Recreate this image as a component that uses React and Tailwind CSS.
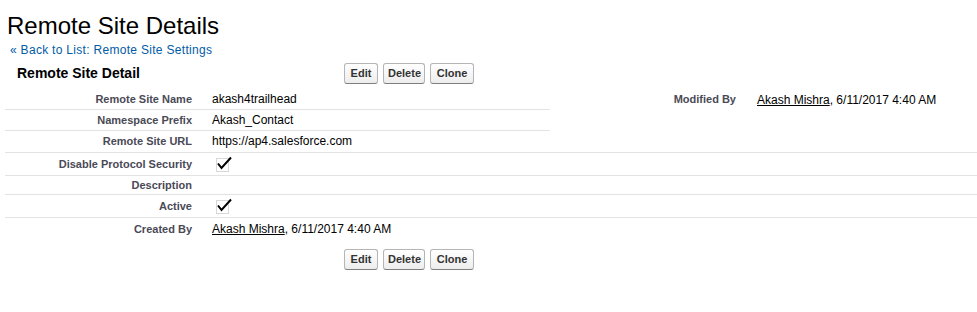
import React from "react";

const btn =
  "h-[21px] px-[4px] rounded-[3px] border border-[#b5b5b5] border-b-[#7f7f7f] bg-gradient-to-b from-white to-[#ededed] text-[11px] font-bold text-[#333] leading-none";

function Buttons() {
  return (
    <div className="flex gap-[5px]">
      <button className={`${btn} w-[34px]`}>Edit</button>
      <button className={`${btn} w-[42px]`}>Delete</button>
      <button className={`${btn} w-[44px]`}>Clone</button>
    </div>
  );
}

function Check() {
  return (
    <svg width="22" height="16" viewBox="0 0 22 16" className="block">
      <rect x="4.5" y="2.5" width="12" height="13" fill="none" stroke="#b0b0b0" strokeDasharray="1 1" />
      <path d="M6 7.5 L9.5 12 L19 1.5" fill="none" stroke="#000" strokeWidth="2" />
    </svg>
  );
}

function Row({ label, h = "h-[21px]", border = true, full = true, children }) {
  return (
    <div className={`flex items-center ${h} ${border ? "border-b border-[#e3e3e3]" : ""}`}>
      <div className="w-[197px] shrink-0 pr-[10px] text-right text-[11px] font-bold text-[#4a4a56]">{label}</div>
      <div className={`${full ? "flex-1" : "w-[348px]"} pl-[10px] text-[12px] text-black`}>{children}</div>
    </div>
  );
}

const User = () => (
  <span>
    <a className="underline text-black">Akash Mishra</a>, 6/11/2017 4:40 AM
  </span>
);

export default function App() {
  return (
    <div className="w-[977px] h-[312px] bg-white font-['Liberation_Sans',Arial,sans-serif]">
      <h1 className="pl-[7px] pt-[14px] text-[24px] leading-[24px] text-black">Remote Site Details</h1>
      <div className="pl-[10px] mt-[5px] h-[14px] leading-[14px] text-[12px] tracking-[0.3px] text-[#015ba7]">
        « Back to List: Remote Site Settings
      </div>
      <div className="mt-[6px] flex items-center h-[21px]">
        <h2 className="w-[344px] pl-[17px] text-[14px] font-bold text-black">Remote Site Detail</h2>
        <Buttons />
      </div>
      <div className="mt-[5px] ml-[5px]">
        <div className="flex border-b border-[#e3e3e3]">
          <div className="w-[545px] shrink-0">
            <Row label="Remote Site Name" full={false}>akash4trailhead</Row>
            <Row label="Namespace Prefix" full={false}>Akash_Contact</Row>
            <Row label="Remote Site URL" h="h-[20px]" border={false} full={false}>https://ap4.salesforce.com</Row>
          </div>
          <div className="flex-1 flex items-start h-[63px]">
            <div className="flex items-center h-[21px]">
              <div className="w-[196px] shrink-0 pr-[10px] text-right text-[11px] font-bold text-[#4a4a56]">Modified By</div>
              <div className="pl-[11px] text-[12px] text-black"><User /></div>
            </div>
          </div>
        </div>
        <Row label="Disable Protocol Security" h="h-[23px]"><Check /></Row>
        <Row label="Description" h="h-[19px]"></Row>
        <Row label="Active" h="h-[23px]"><Check /></Row>
        <Row label="Created By" h="h-[22px]" border={false}><User /></Row>
      </div>
      <div className="mt-[9px] pl-[344px]">
        <Buttons />
      </div>
    </div>
  );
}
